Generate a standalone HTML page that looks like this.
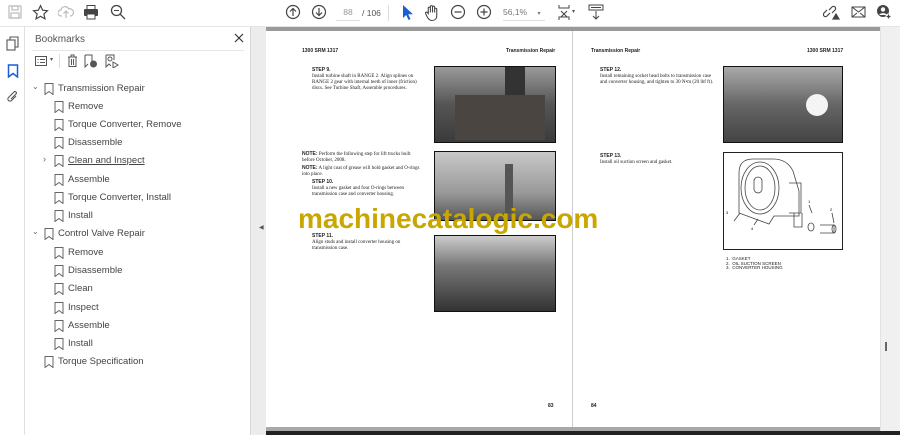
<!DOCTYPE html>
<html><head><meta charset="utf-8">
<style>
*{margin:0;padding:0;box-sizing:border-box}
body{width:900px;height:435px;overflow:hidden;background:#fff;font-family:"Liberation Sans",sans-serif;position:relative}
.abs{position:absolute}
.tb{left:0;top:0;width:900px;height:27px;background:#fff;border-bottom:1px solid #e4e4e4}
.ic{position:absolute;top:4px}
.side{left:0;top:27px;width:25px;height:408px;background:#fff;border-right:1px solid #e0e0e0}
.panel{left:25px;top:27px;width:226px;height:408px;background:#fff;border-right:1px solid #d8d8d8}
.gut{left:251px;top:27px;width:15px;height:408px;background:#ececec}
.doc{left:266px;top:27px;width:614px;height:404px;background:#fff}
.sb{left:880px;top:27px;width:20px;height:404px;background:#f0f0f0;border-left:1px solid #e2e2e2}
.bm{position:absolute;font-size:9.5px;color:#444;white-space:nowrap}
.bm svg{position:absolute;left:-14px;top:0}
.pt{position:absolute;font-family:"Liberation Serif",serif;font-size:5px;line-height:6px;color:#222}
.pt b{font-family:"Liberation Sans",sans-serif;font-weight:bold}
.ph{position:absolute;border:1.5px solid #111;background:linear-gradient(180deg,#9a9a9a,#555 50%,#3a3a3a)}
</style></head><body>
<div class="abs tb">
 <svg class="ic" style="left:7px" width="16" height="16" viewBox="0 0 16 16" fill="none" stroke="#bbb" stroke-width="1.2"><rect x="2" y="2" width="12" height="12"/><rect x="5" y="2" width="6" height="4"/><rect x="4" y="9" width="8" height="5"/></svg>
 <svg class="ic" style="left:32px" width="17" height="17" viewBox="0 0 16 16" fill="none" stroke="#444" stroke-width="1.1"><path d="M8 1.5l2 4.3 4.6.5-3.4 3.1 1 4.6L8 11.6 3.8 14l1-4.6L1.4 6.3 6 5.8z"/></svg>
 <svg class="ic" style="left:58px" width="16" height="16" viewBox="0 0 16 16" fill="none" stroke="#bbb" stroke-width="1.2"><path d="M4 12H3a3 3 0 010-6 4 4 0 017.6-1A3 3 0 0113 12h-1M8 14V7M5.5 9.5L8 7l2.5 2.5"/></svg>
 <svg class="ic" style="left:83px" width="16" height="16" viewBox="0 0 16 16"><rect x="4" y="1.5" width="8" height="4" fill="none" stroke="#444"/><rect x="1" y="5" width="14" height="7" rx="1" fill="#444"/><rect x="4" y="10" width="8" height="5" fill="#fff" stroke="#444"/></svg>
 <svg class="ic" style="left:110px" width="16" height="16" viewBox="0 0 16 16" fill="none" stroke="#444" stroke-width="1.3"><circle cx="6.5" cy="6.5" r="5"/><path d="M10.2 10.2L15 15"/><path d="M4 6.5h5" stroke-width="1"/></svg>
 <svg class="ic" style="left:285px" width="16" height="16" viewBox="0 0 16 16" fill="none" stroke="#444" stroke-width="1.2"><circle cx="8" cy="8" r="6.5"/><path d="M8 12V4.5M5 7.5l3-3 3 3"/></svg>
 <svg class="ic" style="left:311px" width="16" height="16" viewBox="0 0 16 16" fill="none" stroke="#444" stroke-width="1.2"><circle cx="8" cy="8" r="6.5"/><path d="M8 4v7.5M5 8.5l3 3 3-3"/></svg>
 <div class="abs" style="left:336px;top:5px;width:24px;height:16px;font-size:8.5px;color:#999;text-align:center;line-height:14px;border-bottom:1px solid #ddd">88</div>
 <div class="abs" style="left:362px;top:8px;font-size:8.5px;color:#555">/ 106</div>
 <div class="abs" style="left:388px;top:5px;width:1px;height:16px;background:#ddd"></div>
 <svg class="ic" style="left:400px" width="14" height="17" viewBox="0 0 14 17"><path d="M3 1v13l3.2-3 2.3 5 2-1-2.3-4.8H13z" fill="#1a5fd6"/></svg>
 <svg class="ic" style="left:424px" width="17" height="17" viewBox="0 0 16 16" fill="none" stroke="#444" stroke-width="1"><path d="M4 9V4a1 1 0 012 0v4V2.5a1 1 0 012 0V8V3a1 1 0 012 0v5-3a1 1 0 012 0v6c0 3-2 4.5-4.5 4.5S4 14 3 12l-1.5-3a1 1 0 011.7-1z"/></svg>
 <svg class="ic" style="left:450px" width="16" height="16" viewBox="0 0 16 16" fill="none" stroke="#444" stroke-width="1.2"><circle cx="8" cy="8" r="6.5"/><path d="M4.5 8h7"/></svg>
 <svg class="ic" style="left:476px" width="16" height="16" viewBox="0 0 16 16" fill="none" stroke="#444" stroke-width="1.2"><circle cx="8" cy="8" r="6.5"/><path d="M4.5 8h7M8 4.5v7"/></svg>
 <div class="abs" style="left:503px;top:5px;width:42px;height:16px;font-size:8.5px;color:#777;line-height:14px;border-bottom:1px solid #ddd">56,1% <span style="margin-left:8px;font-size:6px">▾</span></div>
 <svg class="ic" style="left:557px" width="16" height="17" viewBox="0 0 16 17" fill="none" stroke="#444" stroke-width="1"><path d="M2 1v3h10V1M2 16v-3h10v3M4 7l3 3-3 3M10 7l-3 3 3 3"/></svg>
 <div class="abs" style="left:572px;top:8px;font-size:6px;color:#555">▾</div>
 <svg class="ic" style="left:588px" width="16" height="16" viewBox="0 0 16 16" fill="none" stroke="#444" stroke-width="1"><rect x="1" y="1" width="14" height="5"/><path d="M3 3.5h10M8 7v8M5 12l3 3 3-3"/></svg>
 <svg class="ic" style="left:823px" width="17" height="16" viewBox="0 0 17 16" fill="none" stroke="#444" stroke-width="1.2"><path d="M7 9l-3 3a2 2 0 01-3-3l3-3M6 6l3-3a2 2 0 013 3l-3 3"/><path d="M10 15l3-5 3 5z" fill="#444"/></svg>
 <svg class="ic" style="left:851px" width="15" height="16" viewBox="0 0 15 16" fill="none" stroke="#444" stroke-width="1"><rect x="1" y="3" width="13" height="10"/><path d="M1 3l6.5 5L14 3M1 13l5-4M14 13l-5-4"/></svg>
 <svg class="ic" style="left:876px" width="16" height="16" viewBox="0 0 16 16"><circle cx="7" cy="7" r="6" fill="#444"/><circle cx="7" cy="5.5" r="2.2" fill="#fff"/><path d="M3 11a4.5 3.5 0 018 0" fill="#fff"/><circle cx="12.5" cy="12.5" r="3" fill="#fff"/><path d="M12.5 10.5v4M10.5 12.5h4" stroke="#444" stroke-width="1.2"/></svg>
</div>
<div class="abs side">
 <svg class="abs" style="left:6px;top:9px" width="14" height="15" viewBox="0 0 14 15" fill="none" stroke="#555" stroke-width="1.1"><rect x="1" y="4" width="8" height="10"/><path d="M4 4V1h8v10H9"/></svg>
 <svg class="abs" style="left:7px;top:37px" width="12" height="14" viewBox="0 0 12 14" fill="none" stroke="#1a5fd6" stroke-width="1.5"><path d="M1.5 1h9v12L6 9.5 1.5 13z"/></svg>
 <svg class="abs" style="left:6px;top:63px" width="14" height="14" viewBox="0 0 14 14" fill="none" stroke="#555" stroke-width="1.1"><path d="M10 6l-4.5 4.5a2 2 0 01-3-3L8 2a1.4 1.4 0 012 2L5 9"/></svg>
</div>
<div class="abs panel">
 <div class="abs" style="left:10px;top:7px;font-size:10px;color:#555">Bookmarks</div>
 <svg class="abs" style="left:209px;top:6px" width="10" height="10" viewBox="0 0 10 10" stroke="#333" stroke-width="1.2"><path d="M1 1l8 8M9 1L1 9"/></svg>
 <div class="abs" style="left:7px;top:23px;width:212px;height:1px;background:#e6e6e6"></div>
 <svg class="abs" style="left:10px;top:29px" width="12" height="10" viewBox="0 0 12 10" fill="none" stroke="#555"><rect x=".5" y=".5" width="11" height="9"/><path d="M2.5 3.5h1M5 3.5h5M2.5 6.5h1M5 6.5h5"/></svg>
 <div class="abs" style="left:25px;top:29px;font-size:6px;color:#555">▾</div>
 <div class="abs" style="left:34px;top:27px;width:1px;height:14px;background:#ddd"></div>
 <svg class="abs" style="left:42px;top:27px" width="11" height="13" viewBox="0 0 11 13" fill="none" stroke="#555"><path d="M1 3h9M4 3V1h3v2M2 3v9.5h7V3M4.5 5v6M6.5 5v6"/></svg>
 <svg class="abs" style="left:59px;top:27px" width="14" height="14" viewBox="0 0 14 14" fill="none" stroke="#555"><path d="M1 1h7v6M1 1v12l3-3"/><circle cx="9.5" cy="10" r="3" fill="#555"/></svg>
 <svg class="abs" style="left:80px;top:27px" width="14" height="14" viewBox="0 0 14 14" fill="none" stroke="#555"><path d="M1 1h8v5M1 1v12l3-3 2 2"/><circle cx="5" cy="5" r="2"/><path d="M8 8l5 3-5 3z"/></svg>
 <div class="bm" style="left:33px;top:56px"><span style="position:absolute;left:-26px;top:-1px;font-size:8px;color:#666">⌄</span><svg width="10" height="12" viewBox="0 0 10 12" fill="none" stroke="#666"><path d="M1 .5h8v11L5 8.5 1 11.5z"/></svg>Transmission Repair</div>
 <div class="bm" style="left:43px;top:74px"><svg width="10" height="12" viewBox="0 0 10 12" fill="none" stroke="#666"><path d="M1 .5h8v11L5 8.5 1 11.5z"/></svg>Remove</div>
 <div class="bm" style="left:43px;top:92px"><svg width="10" height="12" viewBox="0 0 10 12" fill="none" stroke="#666"><path d="M1 .5h8v11L5 8.5 1 11.5z"/></svg>Torque Converter, Remove</div>
 <div class="bm" style="left:43px;top:110px"><svg width="10" height="12" viewBox="0 0 10 12" fill="none" stroke="#666"><path d="M1 .5h8v11L5 8.5 1 11.5z"/></svg>Disassemble</div>
 <div class="bm" style="left:43px;top:128px;text-decoration:underline"><span style="position:absolute;left:-25px;top:-1px;font-size:9px;color:#666">›</span><svg width="10" height="12" viewBox="0 0 10 12" fill="none" stroke="#666"><path d="M1 .5h8v11L5 8.5 1 11.5z"/></svg>Clean and Inspect</div>
 <div class="bm" style="left:43px;top:147px"><svg width="10" height="12" viewBox="0 0 10 12" fill="none" stroke="#666"><path d="M1 .5h8v11L5 8.5 1 11.5z"/></svg>Assemble</div>
 <div class="bm" style="left:43px;top:165px"><svg width="10" height="12" viewBox="0 0 10 12" fill="none" stroke="#666"><path d="M1 .5h8v11L5 8.5 1 11.5z"/></svg>Torque Converter, Install</div>
 <div class="bm" style="left:43px;top:183px"><svg width="10" height="12" viewBox="0 0 10 12" fill="none" stroke="#666"><path d="M1 .5h8v11L5 8.5 1 11.5z"/></svg>Install</div>
 <div class="bm" style="left:33px;top:201px"><span style="position:absolute;left:-26px;top:-1px;font-size:8px;color:#666">⌄</span><svg width="10" height="12" viewBox="0 0 10 12" fill="none" stroke="#666"><path d="M1 .5h8v11L5 8.5 1 11.5z"/></svg>Control Valve Repair</div>
 <div class="bm" style="left:43px;top:220px"><svg width="10" height="12" viewBox="0 0 10 12" fill="none" stroke="#666"><path d="M1 .5h8v11L5 8.5 1 11.5z"/></svg>Remove</div>
 <div class="bm" style="left:43px;top:238px"><svg width="10" height="12" viewBox="0 0 10 12" fill="none" stroke="#666"><path d="M1 .5h8v11L5 8.5 1 11.5z"/></svg>Disassemble</div>
 <div class="bm" style="left:43px;top:256px"><svg width="10" height="12" viewBox="0 0 10 12" fill="none" stroke="#666"><path d="M1 .5h8v11L5 8.5 1 11.5z"/></svg>Clean</div>
 <div class="bm" style="left:43px;top:275px"><svg width="10" height="12" viewBox="0 0 10 12" fill="none" stroke="#666"><path d="M1 .5h8v11L5 8.5 1 11.5z"/></svg>Inspect</div>
 <div class="bm" style="left:43px;top:293px"><svg width="10" height="12" viewBox="0 0 10 12" fill="none" stroke="#666"><path d="M1 .5h8v11L5 8.5 1 11.5z"/></svg>Assemble</div>
 <div class="bm" style="left:43px;top:311px"><svg width="10" height="12" viewBox="0 0 10 12" fill="none" stroke="#666"><path d="M1 .5h8v11L5 8.5 1 11.5z"/></svg>Install</div>
 <div class="bm" style="left:33px;top:329px"><svg width="10" height="12" viewBox="0 0 10 12" fill="none" stroke="#666"><path d="M1 .5h8v11L5 8.5 1 11.5z"/></svg>Torque Specification</div>
</div>
<div class="abs gut"><div class="abs" style="left:8px;top:197px;font-size:6px;color:#555">◀</div></div>
<div class="abs doc">
 <div class="abs" style="left:0;top:0;width:614px;height:4px;background:#9a9a9a"></div>
 <div class="abs" style="left:306px;top:4px;width:1px;height:400px;background:#ccc"></div>
 <div class="abs" style="left:0;top:400px;width:614px;height:4px;background:#a8a8a8"></div>
 <div class="pt" style="left:36px;top:21px"><b>1300 SRM 1317</b></div>
 <div class="pt" style="left:240px;top:21px"><b>Transmission Repair</b></div>
 <div class="pt" style="left:325px;top:21px"><b>Transmission Repair</b></div>
 <div class="pt" style="left:541px;top:21px"><b>1300 SRM 1317</b></div>
 <div class="pt" style="left:46px;top:40px;width:110px"><b>STEP 9.</b><br>Install turbine shaft in RANGE 2. Align splines on RANGE 2 gear with internal teeth of inner (friction) discs. See Turbine Shaft, Assemble procedures.</div>
 <div class="pt" style="left:36px;top:124px;width:120px"><b>NOTE:</b> Perform the following step for lift trucks built before October, 2008.</div>
 <div class="pt" style="left:36px;top:138px;width:120px"><b>NOTE:</b> A light coat of grease will hold gasket and O-rings into place.</div>
 <div class="pt" style="left:46px;top:152px;width:112px"><b>STEP 10.</b><br>Install a new gasket and four O-rings between transmission case and converter housing.</div>
 <div class="pt" style="left:46px;top:206px;width:112px"><b>STEP 11.</b><br>Align studs and install converter housing on transmission case.</div>
 <div class="pt" style="left:334px;top:40px;width:118px"><b>STEP 12.</b><br>Install remaining socket head bolts to transmission case and converter housing, and tighten to 30 N•m (20 lbf ft).</div>
 <div class="pt" style="left:334px;top:126px;width:118px"><b>STEP 13.</b><br>Install oil suction screen and gasket.</div>
 <div class="ph" style="left:168px;top:39px;width:122px;height:77px"><div class="abs" style="left:70px;top:0;width:20px;height:40px;background:#333"></div><div class="abs" style="left:20px;top:28px;width:90px;height:45px;background:#4a4540"></div></div>
 <div class="ph" style="left:168px;top:124px;width:122px;height:70px;background:linear-gradient(180deg,#c8c8c8,#999 60%,#555)"><div class="abs" style="left:70px;top:12px;width:8px;height:50px;background:#555"></div></div>
 <div class="ph" style="left:168px;top:208px;width:122px;height:77px;background:linear-gradient(180deg,#ccc,#777 40%,#555 70%,#333)"></div>
 <div class="ph" style="left:457px;top:39px;width:120px;height:77px;background:linear-gradient(180deg,#aaa,#666 50%,#444)"><div class="abs" style="left:82px;top:27px;width:22px;height:22px;border-radius:50%;background:#f4f4f4"></div></div>
 <div class="abs" style="left:457px;top:125px;width:120px;height:98px;border:1px solid #222;background:#fff">
  <svg width="118" height="96" viewBox="0 0 118 96" fill="none" stroke="#444" stroke-width=".8"><path d="M15 60V20q0-14 14-14h20q14 0 20 12l6 20v25H50l-5 8z"/><ellipse cx="36" cy="35" rx="19" ry="26"/><ellipse cx="36" cy="35" rx="15" ry="22"/><rect x="30" y="24" width="8" height="16" rx="4"/><path d="M65 30h12v30H65M70 60v14h8V60"/><ellipse cx="87" cy="74" rx="3" ry="4"/><path d="M96 72h14v8H96"/><ellipse cx="110" cy="76" rx="2" ry="4"/><path d="M10 68l6-8M30 72l4-6M88 60l-3-8M110 70l-2-10"/></svg>
  <div class="abs" style="left:2px;top:57px;font-size:4px">3</div><div class="abs" style="left:27px;top:73px;font-size:4px">4</div><div class="abs" style="left:84px;top:46px;font-size:4px">1</div><div class="abs" style="left:106px;top:54px;font-size:4px">2</div>
 </div>
 <div class="pt" style="left:460px;top:230px;font-family:'Liberation Sans',sans-serif;font-size:4.5px;line-height:4.5px">1.&nbsp;&nbsp;GASKET<br>2.&nbsp;&nbsp;OIL SUCTION SCREEN<br>3.&nbsp;&nbsp;CONVERTER HOUSING</div>
 <div class="pt" style="left:282px;top:376px;font-family:'Liberation Sans',sans-serif;font-size:5px"><b>83</b></div>
 <div class="pt" style="left:325px;top:376px;font-family:'Liberation Sans',sans-serif;font-size:5px"><b>84</b></div>
 <div class="abs" style="left:32px;top:176px;font-size:28px;font-weight:bold;color:#c9a700;letter-spacing:0;white-space:nowrap">machinecatalogic.com</div>
</div>
<div class="abs sb"><div class="abs" style="left:4px;top:315px;width:2px;height:9px;background:#666"></div></div>
<div class="abs" style="left:266px;top:431px;width:634px;height:4px;background:#222"></div>
</body></html>
